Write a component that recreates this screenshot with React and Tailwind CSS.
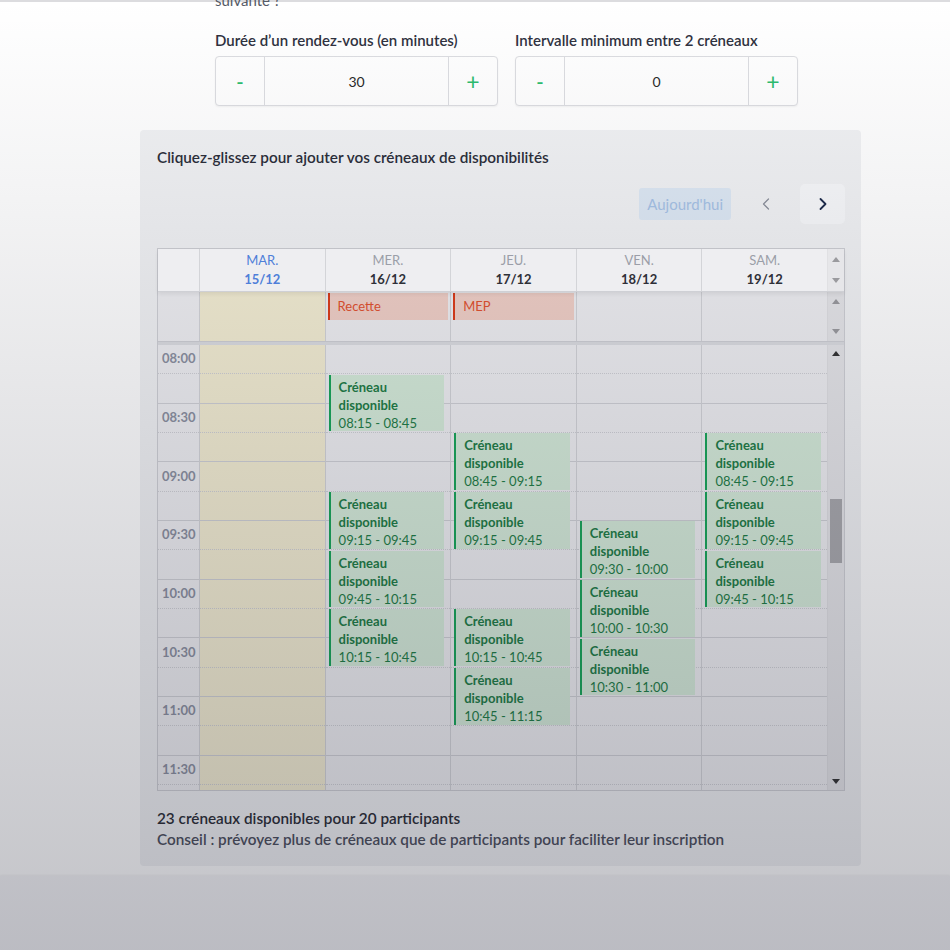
import React from "react";
import { ChevronLeft, ChevronRight } from "lucide-react";

const R = 29.33;
const ROWS = 16;
const times = ["08:00", "08:30", "09:00", "09:30", "10:00", "10:30", "11:00", "11:30"];

const days = [
  { name: "MAR.", date: "15/12", today: true },
  { name: "MER.", date: "16/12" },
  { name: "JEU.", date: "17/12" },
  { name: "VEN.", date: "18/12" },
  { name: "SAM.", date: "19/12" },
];

const events = [
  [],
  [15, 75, 105, 135],
  [45, 75, 135, 165],
  [90, 120, 150],
  [45, 75, 105],
];

const allDay = [null, "Recette", "MEP", null, null];

function fmt(m) {
  const h = 8 + Math.floor(m / 60);
  const mm = m % 60;
  return `${String(h).padStart(2, "0")}:${String(mm).padStart(2, "0")}`;
}

function Up({ dark }) {
  return (
    <svg width="8" height="5" viewBox="0 0 8 5">
      <path d="M0 5 L4 0 L8 5 Z" fill={dark ? "#333" : "#9a9a9e"} />
    </svg>
  );
}
function Down({ dark }) {
  return (
    <svg width="8" height="5" viewBox="0 0 8 5">
      <path d="M0 0 L4 5 L8 0 Z" fill={dark ? "#333" : "#9a9a9e"} />
    </svg>
  );
}

function Rows() {
  return (
    <>
      {Array.from({ length: ROWS }).map((_, i) => (
        <div
          key={i}
          style={{ height: R }}
          className={
            i % 2 === 0
              ? "border-b border-dotted border-[#cfd0d5]"
              : "border-b border-[#d0d1d6]"
          }
        />
      ))}
    </>
  );
}

function Stepper({ value }) {
  return (
    <div className="flex h-[50px] w-[283px] rounded-[4px] border border-[#dcdde1] bg-white shadow-[0_1px_2px_rgba(0,0,0,0.05)]">
      <div className="flex w-[49px] items-center justify-center border-r border-[#dcdde1] text-[20px] font-semibold text-[#2dbd6e]">-</div>
      <div className="flex flex-1 items-center justify-center text-[14px] text-[#2a2a2a]">{value}</div>
      <div className="flex w-[49px] items-center justify-center border-l border-[#dcdde1] text-[23px] font-normal text-[#2dbd6e]">+</div>
    </div>
  );
}

export default function App() {
  return (
    <div
      className="relative h-[950px] w-[950px] overflow-hidden bg-white"
      style={{ fontFamily: "Lato, 'Open Sans', sans-serif" }}
    >
      <div className="h-[2px] bg-[#dcdcdf]" />
      <div className="ml-[215px] -mt-[12px] text-[15px] leading-[20px] text-[#555a66]">suivante ?</div>

      <div className="ml-[215px] mt-[20px] flex gap-[17px]">
        <div className="flex flex-col">
          <div className="text-[15px] font-semibold leading-[20px] text-[#2f3240]">Durée d’un rendez-vous (en minutes)</div>
          <div className="mt-[6px]"><Stepper value="30" /></div>
        </div>
        <div className="flex flex-col">
          <div className="text-[15px] font-semibold leading-[20px] text-[#2f3240]">Intervalle minimum entre 2 créneaux</div>
          <div className="mt-[6px]"><Stepper value="0" /></div>
        </div>
      </div>

      <div className="ml-[140px] mt-[24px] w-[721px] rounded-[4px] bg-[#f1f2f4] pl-[17px] pr-[16px] pt-[17px] pb-[16px]">
        <div className="text-[15.3px] font-semibold leading-[20px] text-[#2b2e3a]">Cliquez-glissez pour ajouter vos créneaux de disponibilités</div>

        <div className="mt-[17px] flex items-center justify-end gap-3">
          <div className="flex h-[32px] items-center rounded-[3px] bg-[#dde8f4] px-[8px] text-[15px] text-[#a6c2e6]">Aujourd'hui</div>
          <div className="flex h-[40px] w-[45px] items-center justify-center text-[#8c909b]">
            <ChevronLeft size={20} strokeWidth={1.5} />
          </div>
          <div className="flex h-[40px] w-[45px] items-center justify-center rounded-[5px] bg-[#f7f8fa] text-[#1c2a4a]">
            <ChevronRight size={20} strokeWidth={2.2} />
          </div>
        </div>

        <div className="mt-[24px] border border-[#cfd0d5] bg-[#efeff2]">
          {/* header */}
          <div className="relative z-10 flex h-[43px] border-b border-[#cfd0d5] bg-[#eeeef1] shadow-[0_2px_4px_rgba(0,0,0,0.07)]">
            <div className="w-[41px]" />
            {days.map((d, i) => (
              <div key={i} className="flex flex-1 flex-col items-center justify-center border-l border-[#d3d4d8] text-[13px] leading-[19px]">
                <div className={d.today ? "text-[#4f7fd9]" : "text-[#9b9ea8]"}>{d.name}</div>
                <div className={d.today ? "font-bold text-[#4f7fd9]" : "font-bold text-[#2e3038]"}>{d.date}</div>
              </div>
            ))}
            <div className="flex w-[17px] flex-col items-center justify-between border-l border-[#e0e0e3] bg-[#e6e6e9] py-[8px]">
              <Up /><Down />
            </div>
          </div>

          {/* all-day */}
          <div className="flex h-[49px]">
            <div className="w-[41px]" />
            {days.map((d, i) => (
              <div key={i} className={"flex-1 border-l border-[#d3d4d8] pt-[1px] " + (d.today ? "bg-[#f4eed3]" : "")}>
                {allDay[i] && (
                  <div className="ml-[2px] mr-[2px] flex h-[27px] items-center border-l-2 border-[#dc3b19] bg-[#f1d0c7] pl-[8px] text-[13px] text-[#e2512e]">
                    {allDay[i]}
                  </div>
                )}
              </div>
            ))}
            <div className="flex w-[17px] flex-col items-center justify-between border-l border-[#e0e0e3] bg-[#e6e6e9] py-[7px]">
              <Up /><Down />
            </div>
          </div>

          <div className="h-[4px] border-t border-[#cfd0d5] bg-[#dcdde1]" />

          {/* grid */}
          <div className="flex h-[445px] overflow-hidden">
            <div className="w-[41px] shrink-0">
              {Array.from({ length: ROWS }).map((_, i) => (
                <div
                  key={i}
                  style={{ height: R }}
                  className={
                    "flex items-center pl-[4px] text-[13px] font-bold text-[#8b90a0] " +
                    (i % 2 === 0 ? "border-b border-dotted border-[#cfd0d5]" : "border-b border-[#d0d1d6]")
                  }
                >
                  {i % 2 === 0 ? times[i / 2] : ""}
                </div>
              ))}
            </div>
            {days.map((d, di) => (
              <div key={di} className={"relative flex-1 shrink-0 border-l border-[#d3d4d8] " + (d.today ? "bg-[#f4eed3]" : "")}>
                <Rows />
                {events[di].map((s) => (
                  <div
                    key={s}
                    className="absolute left-[3px] right-[6px] border-l-2 border-[#17a558] bg-[#d6ecda] pl-[8px] pt-[3px] text-[13px] leading-[18px] text-[#1d7c45]"
                    style={{ top: (s / 15) * R + 0.5, height: 2 * R - 2 }}
                  >
                    <div className="font-bold">Créneau</div>
                    <div className="font-bold">disponible</div>
                    <div>{fmt(s)} - {fmt(s + 30)}</div>
                  </div>
                ))}
              </div>
            ))}
            <div className="relative flex w-[17px] shrink-0 flex-col items-center justify-between border-l border-[#e0e0e3] bg-[#e6e6e9] py-[6px]">
              <Up dark /><Down dark />
              <div className="absolute left-[2px] top-[154px] h-[64px] w-[12px] bg-[#a9a9ad]" />
            </div>
          </div>
        </div>

        <div className="mt-[17px] text-[15.3px] font-semibold leading-[21px] text-[#2a2c35]">23 créneaux disponibles pour 20 participants</div>
        <div className="text-[15.3px] font-semibold leading-[21px] text-[#4b4e5c]">Conseil : prévoyez plus de créneaux que de participants pour faciliter leur inscription</div>
      </div>

      <div className="mt-[10px] h-[80px] bg-[#f6f6f8] shadow-[0_-1px_2px_rgba(0,0,0,0.05)]" />

      <div
        className="pointer-events-none absolute inset-0"
        style={{ background: "linear-gradient(to bottom, rgba(30,32,50,0) 0%, rgba(30,32,50,0.05) 20%, rgba(30,32,50,0.27) 100%)" }}
      />
    </div>
  );
}
